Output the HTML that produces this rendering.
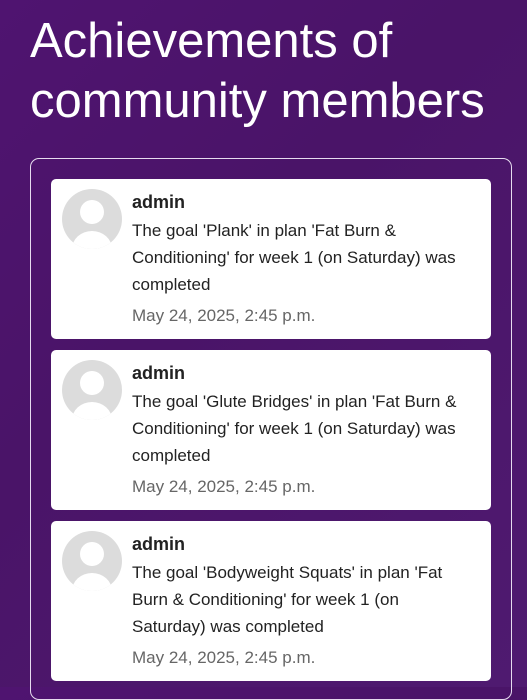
<!DOCTYPE html>
<html><head><style>
html,body{margin:0;padding:0}
body{width:527px;height:687px;overflow:hidden;background:linear-gradient(135deg,#4f1470 0%,#4a1468 40%,#4f1a70 100%);font-family:"Liberation Sans",sans-serif;position:relative}
h1{position:absolute;left:30px;top:11px;margin:0;color:#fff;font-weight:normal;font-size:49px;line-height:60px;letter-spacing:0px}
.box{position:absolute;left:30px;top:158px;width:480px;height:540px;border:1px solid #e6dcef;border-radius:9px}
.card{position:absolute;left:51px;width:440px;height:160px;background:#fff;border-radius:5px}
.av{position:absolute;left:11px;top:10px;width:60px;height:60px;border-radius:50%;background:#dcdcdc;overflow:hidden}
.av:before{content:"";position:absolute;left:18px;top:11px;width:24px;height:24px;border-radius:50%;background:#fff}
.av:after{content:"";position:absolute;left:10px;top:42px;width:40px;height:36px;border-radius:50%;background:#fff}
.nm{position:absolute;left:81px;top:13px;font-weight:bold;font-size:18px;color:#222}
.tx{position:absolute;left:81px;top:38px;font-size:17px;line-height:27px;color:#222;white-space:nowrap}
.dt{position:absolute;left:81px;top:127px;font-size:17px;color:#666}
</style></head><body>
<h1>Achievements of<br>community members</h1>
<div class="box"></div>
<div class="card" style="top:179px"><div class="av"></div><div class="nm">admin</div><div class="tx">The goal 'Plank' in plan 'Fat Burn &amp;<br>Conditioning' for week 1 (on Saturday) was<br>completed</div><div class="dt">May 24, 2025, 2:45 p.m.</div></div>
<div class="card" style="top:350px"><div class="av"></div><div class="nm">admin</div><div class="tx">The goal 'Glute Bridges' in plan 'Fat Burn &amp;<br>Conditioning' for week 1 (on Saturday) was<br>completed</div><div class="dt">May 24, 2025, 2:45 p.m.</div></div>
<div class="card" style="top:521px"><div class="av"></div><div class="nm">admin</div><div class="tx">The goal 'Bodyweight Squats' in plan 'Fat<br>Burn &amp; Conditioning' for week 1 (on<br>Saturday) was completed</div><div class="dt">May 24, 2025, 2:45 p.m.</div></div>
</body></html>
